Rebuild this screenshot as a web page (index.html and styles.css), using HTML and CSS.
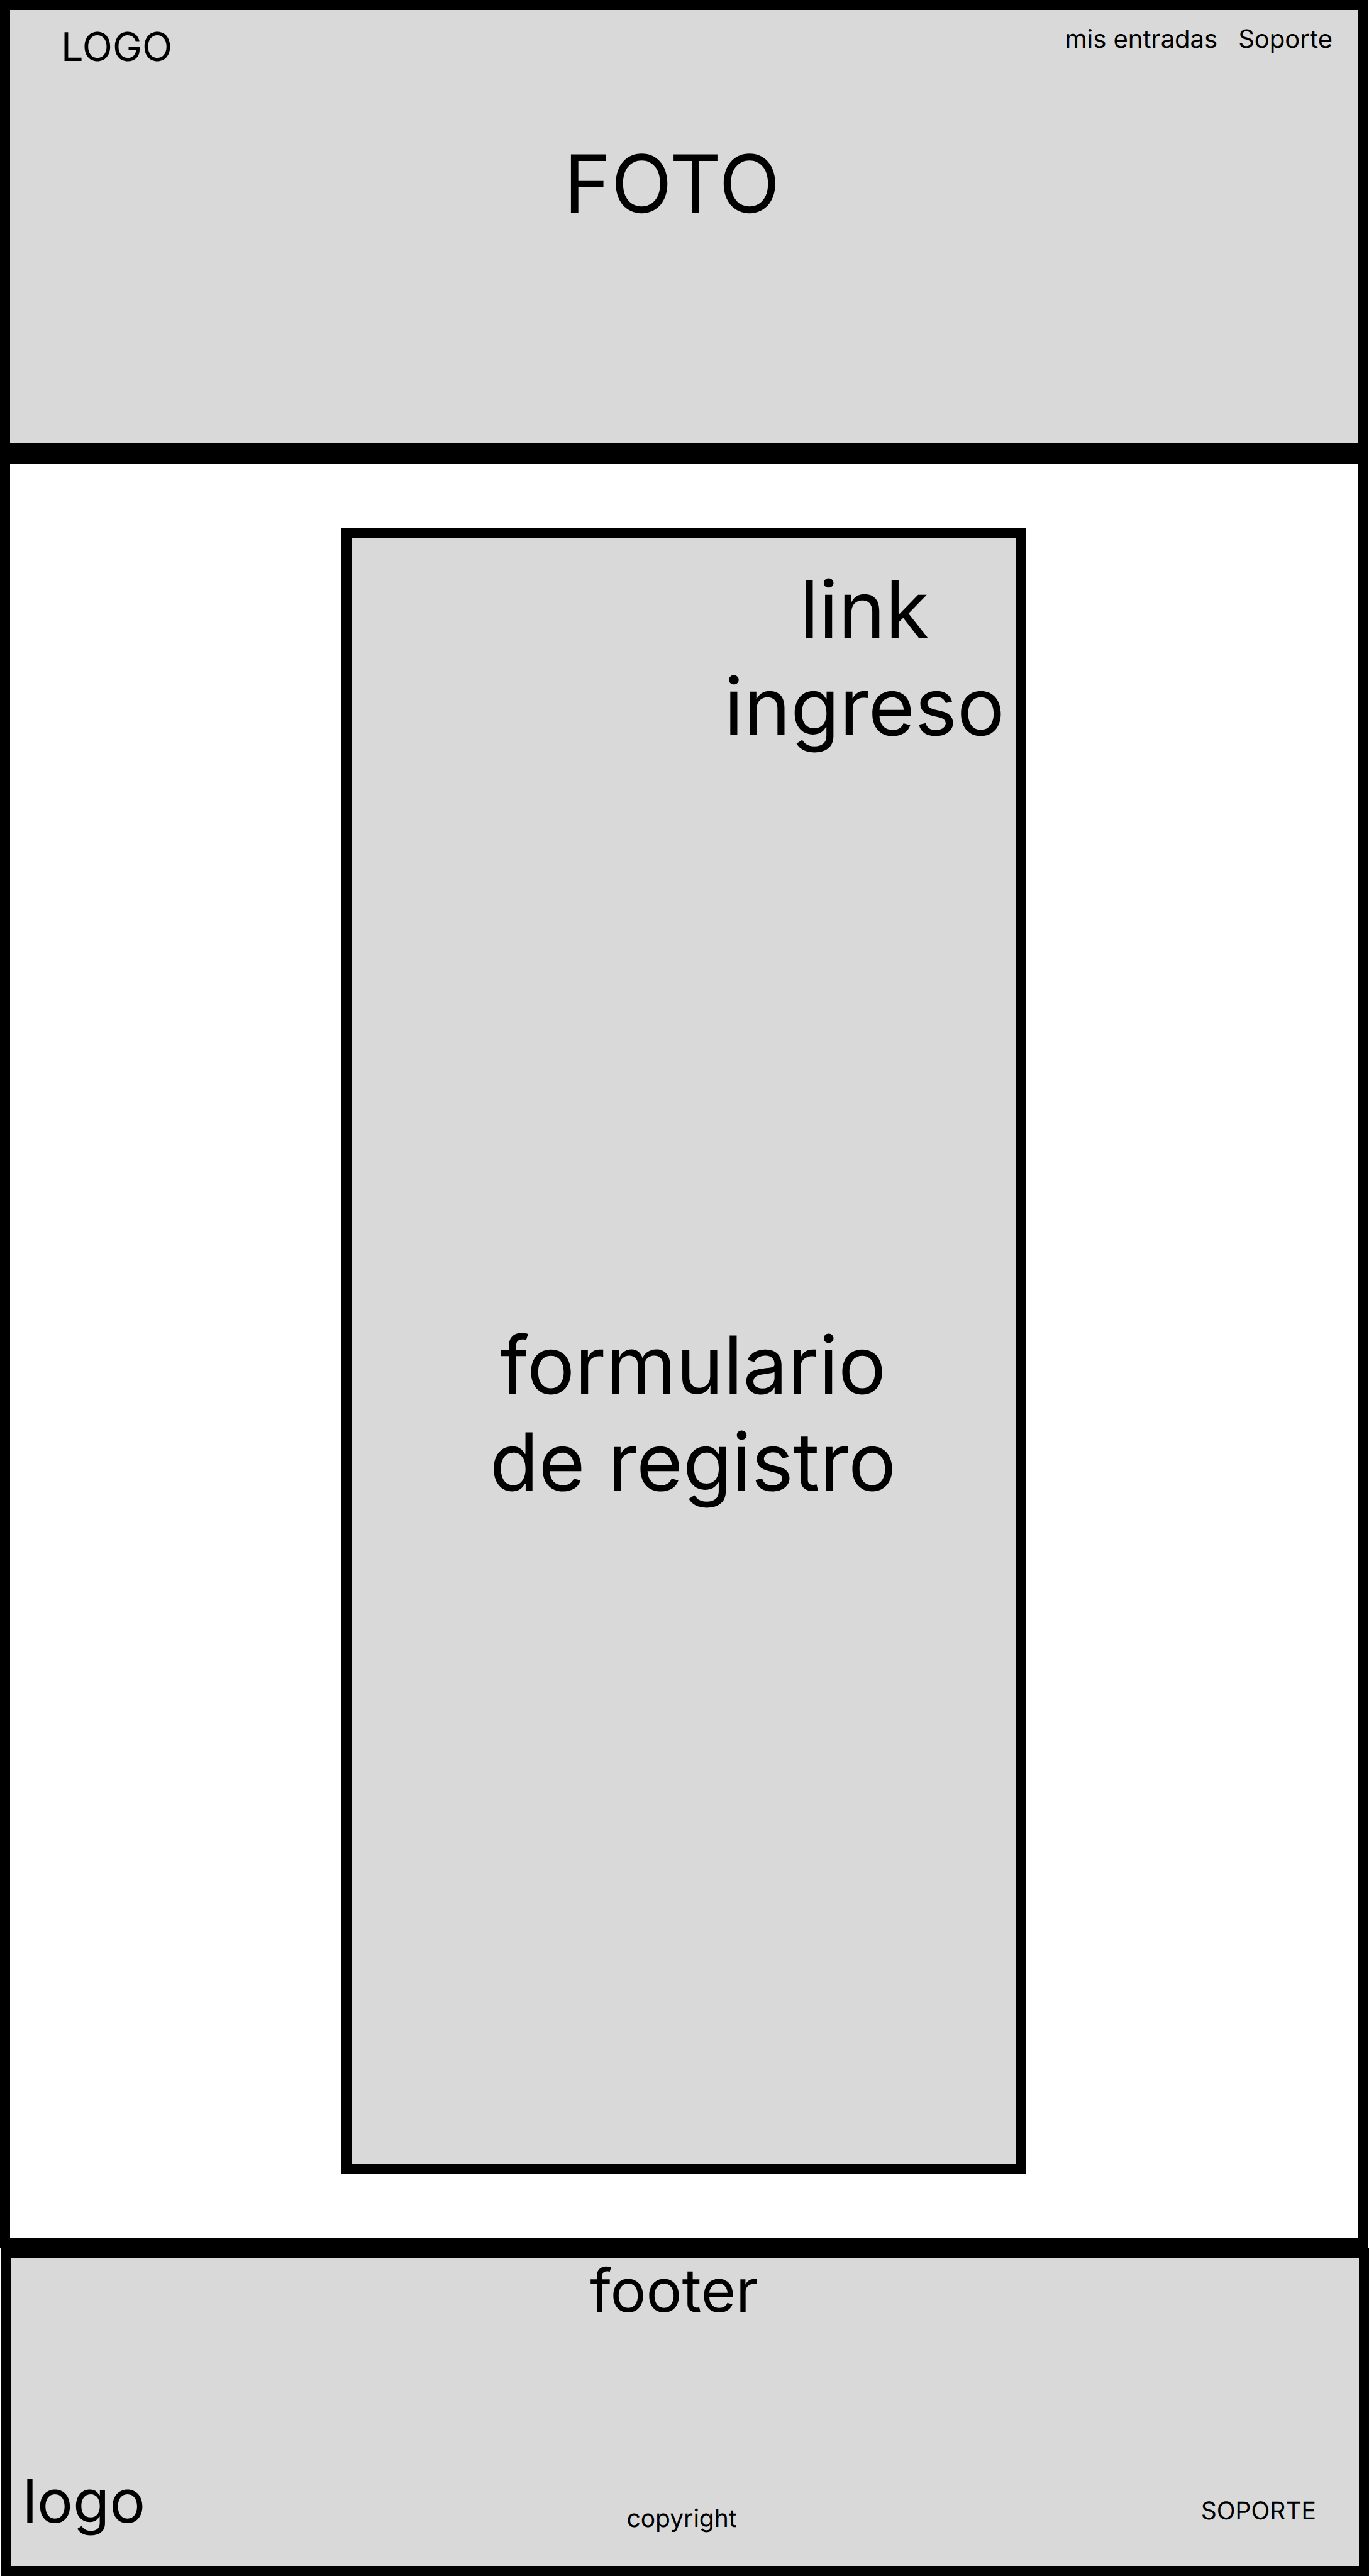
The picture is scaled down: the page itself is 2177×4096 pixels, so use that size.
FILE: index.html
```html
<!DOCTYPE html>
<html lang="es">
<head>
  <meta charset="utf-8">
  <meta name="viewport" content="width=device-width, initial-scale=1">
  <title>Registro</title>
  <link rel="stylesheet" href="styles.css">
</head>
<body>
  <header class="hero">
    <div class="hero-bar">
      <a class="hero-logo" href="#">LOGO</a>
      <nav class="hero-nav">
        <a href="#">mis entradas</a>
        <a href="#">Soporte</a>
      </nav>
    </div>
    <div class="hero-photo">FOTO</div>
  </header>

  <main class="content">
    <section class="register">
      <a class="register-login" href="#">link<br>ingreso</a>
      <h1 class="register-title">formulario<br>de registro</h1>
    </section>
  </main>

  <footer class="footer">
    <div class="footer-title">footer</div>
    <div class="footer-row">
      <a class="footer-logo" href="#">logo</a>
      <small class="footer-copyright">copyright</small>
      <a class="footer-support" href="#">SOPORTE</a>
    </div>
  </footer>
</body>
</html>
```
FILE: styles.css
```css
:root {
  --ink: #000;
  --panel: #d9d9d9;
  --frame: 16px solid var(--ink);
}

* {
  box-sizing: border-box;
}

body {
  display: flex;
  flex-direction: column;
  min-height: 100vh;
  margin: 0;
  background: #fff;
  color: var(--ink);
  font-family: Inter, "Liberation Sans", sans-serif;
  text-rendering: geometricPrecision;
}

a {
  color: inherit;
  text-decoration: none;
}

/* Header */
.hero {
  min-height: 721px;
  margin-right: 2px;
  padding-top: 21px;
  border: var(--frame);
  background: var(--panel);
}

.hero-bar {
  display: flex;
  justify-content: space-between;
  align-items: flex-start;
  padding: 0 40px 0 81px;
}

.hero-logo {
  font-size: 63px;
  line-height: 76px;
}

.hero-nav {
  display: flex;
  gap: 33px;
  font-size: 40px;
  line-height: 50px;
}

.hero-photo {
  margin-top: 102px;
  padding-right: 38px;
  font-size: 127px;
  line-height: 154px;
  text-align: center;
}

/* Registration */
.content {
  display: flex;
  flex: 1;
  justify-content: center;
  margin-right: 2px;
  padding: 102px 16px;
  border: var(--frame);
}

.register {
  display: flex;
  flex-direction: column;
  width: 100%;
  max-width: 1089px;
  padding: 37px 18px 148px 47px;
  border: var(--frame);
  background: var(--panel);
  font-size: 127px;
  line-height: 154px;
  text-align: center;
}

.register-login {
  align-self: flex-end;
}

.register-title {
  margin: auto 0;
  font-size: inherit;
  font-weight: 400;
}

/* Footer */
.footer {
  display: flex;
  flex-direction: column;
  justify-content: space-between;
  min-height: 521px;
  margin-left: 2px;
  padding-bottom: 52px;
  border: var(--frame);
  background: var(--panel);
}

.footer-title,
.footer-logo {
  font-size: 95px;
  line-height: 102px;
}

.footer-title {
  padding-right: 35px;
  text-align: center;
}

.footer-row {
  display: grid;
  grid-template-columns: 1fr auto 1fr;
  align-items: end;
  padding: 0 29px 0 18px;
}

.footer-logo {
  justify-self: start;
}

.footer-copyright,
.footer-support {
  font-size: 39px;
  line-height: 46px;
}

.footer-support {
  justify-self: end;
  margin: 0 39px 12px 0;
}
```
